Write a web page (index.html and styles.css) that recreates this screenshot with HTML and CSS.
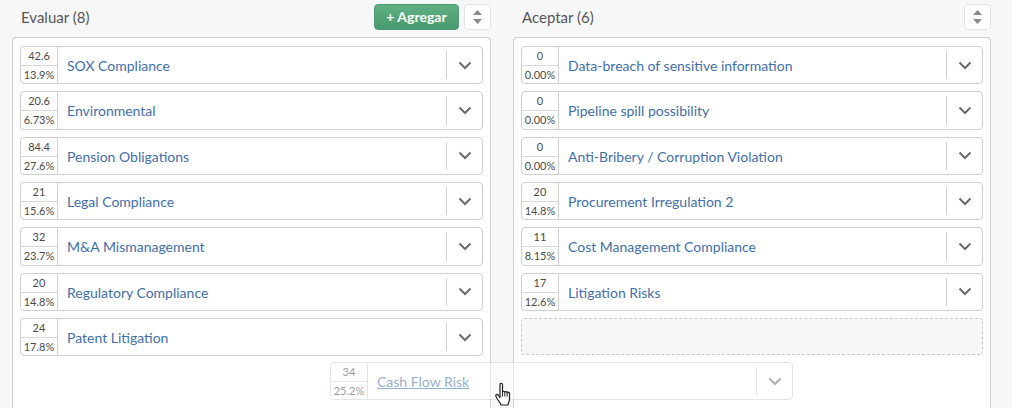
FILE: index.html
```html
<!DOCTYPE html>
<html lang="es">
<head>
<meta charset="utf-8">
<title>Evaluar / Aceptar</title>
<link rel="stylesheet" href="styles.css">
</head>
<body>
<div class="board">
  <section class="col">
    <header class="col-head">
      <h2 class="col-title">Evaluar (8)</h2>
      <button class="btn-add">+ Agregar</button>
      <button class="btn-sort"><svg width="11" height="16" viewBox="0 0 11 16"><path d="M5.5 1 10 6H1zM5.5 15 1 10h9z" fill="#8a8a8a"/><path d="M3.5 5 5.5 3 7.500 5M3.500 11l2 2 2-2" fill="none" stroke="#fff" stroke-width="0"/></svg></button>
    </header>
    <div class="panel">
      <article class="item"><div class="score"><span>42.6</span><span>13.9%</span></div><a class="name">SOX Compliance</a><div class="toggle"><svg class="chev" viewBox="0 0 14 9"><path d="M1.500 1.500 7 7l5.500-5.500" /></svg></div></article>
      <article class="item"><div class="score"><span>20.6</span><span>6.73%</span></div><a class="name">Environmental</a><div class="toggle"><svg class="chev" viewBox="0 0 14 9"><path d="M1.500 1.500 7 7l5.500-5.500" /></svg></div></article>
      <article class="item"><div class="score"><span>84.4</span><span>27.6%</span></div><a class="name">Pension Obligations</a><div class="toggle"><svg class="chev" viewBox="0 0 14 9"><path d="M1.500 1.500 7 7l5.500-5.500" /></svg></div></article>
      <article class="item"><div class="score"><span>21</span><span>15.6%</span></div><a class="name">Legal Compliance</a><div class="toggle"><svg class="chev" viewBox="0 0 14 9"><path d="M1.500 1.500 7 7l5.500-5.500" /></svg></div></article>
      <article class="item"><div class="score"><span>32</span><span>23.7%</span></div><a class="name">M&amp;A Mismanagement</a><div class="toggle"><svg class="chev" viewBox="0 0 14 9"><path d="M1.500 1.500 7 7l5.500-5.500" /></svg></div></article>
      <article class="item"><div class="score"><span>20</span><span>14.8%</span></div><a class="name">Regulatory Compliance</a><div class="toggle"><svg class="chev" viewBox="0 0 14 9"><path d="M1.500 1.500 7 7l5.500-5.500" /></svg></div></article>
      <article class="item"><div class="score"><span>24</span><span>17.8%</span></div><a class="name">Patent Litigation</a><div class="toggle"><svg class="chev" viewBox="0 0 14 9"><path d="M1.500 1.500 7 7l5.500-5.500" /></svg></div></article>
    </div>
  </section>
  <section class="col">
    <header class="col-head">
      <h2 class="col-title">Aceptar (6)</h2>
      <button class="btn-sort"><svg width="11" height="16" viewBox="0 0 11 16"><path d="M5.500 1 10 6H1zM5.500 15 1 10h9z" fill="#8a8a8a"/></svg></button>
    </header>
    <div class="panel">
      <article class="item"><div class="score"><span>0</span><span>0.00%</span></div><a class="name">Data-breach of sensitive information</a><div class="toggle"><svg class="chev" viewBox="0 0 14 9"><path d="M1.500 1.500 7 7l5.500-5.500" /></svg></div></article>
      <article class="item"><div class="score"><span>0</span><span>0.00%</span></div><a class="name">Pipeline spill possibility</a><div class="toggle"><svg class="chev" viewBox="0 0 14 9"><path d="M1.500 1.500 7 7l5.500-5.500" /></svg></div></article>
      <article class="item"><div class="score"><span>0</span><span>0.00%</span></div><a class="name">Anti-Bribery / Corruption Violation</a><div class="toggle"><svg class="chev" viewBox="0 0 14 9"><path d="M1.500 1.500 7 7l5.500-5.500" /></svg></div></article>
      <article class="item"><div class="score"><span>20</span><span>14.8%</span></div><a class="name">Procurement Irregulation 2</a><div class="toggle"><svg class="chev" viewBox="0 0 14 9"><path d="M1.500 1.500 7 7l5.500-5.500" /></svg></div></article>
      <article class="item"><div class="score"><span>11</span><span>8.15%</span></div><a class="name">Cost Management Compliance</a><div class="toggle"><svg class="chev" viewBox="0 0 14 9"><path d="M1.500 1.500 7 7l5.500-5.500" /></svg></div></article>
      <article class="item"><div class="score"><span>17</span><span>12.6%</span></div><a class="name">Litigation Risks</a><div class="toggle"><svg class="chev" viewBox="0 0 14 9"><path d="M1.500 1.500 7 7l5.500-5.500" /></svg></div></article>
      <div class="placeholder"></div>
    </div>
  </section>
</div>
<article class="item dragging"><div class="score"><span>34</span><span>25.2%</span></div><a class="name drag-link">Cash Flow Risk</a><div class="toggle"><svg class="chev" viewBox="0 0 14 9"><path d="M1.500 1.500 7 7l5.500-5.500" /></svg></div></article>
<svg class="cursor" width="18" height="25" viewBox="0 0 18 25"><path d="M5 2.500c0-1.700 2.500-1.700 2.500 0V10c0-1 2.300-1 2.300.3 0-1 2.300-1 2.300.4 0-.9 2.400-.7 2.400.8V17c0 2.500-1.200 3.500-1.500 6H6c-.5-2-2-3.500-3.300-5.500L1 14.500c-.9-1.700 1.200-2.900 2.300-1.300L5 15.500z" fill="#fff" stroke="#222" stroke-width="1.200" stroke-linejoin="round"/><path d="M7.500 10v4.500M9.800 10.500v4M12.100 10.800v3.700" stroke="#222" stroke-width="1" fill="none"/></svg>
</body>
</html>
```
FILE: styles.css
```css
* { box-sizing: border-box; }
html, body { height: 100%; }
body {
  margin: 0;
  height: 408px;
  overflow: hidden;
  background: #f7f7f7;
  font-family: Lato, "Open Sans", sans-serif;
  color: #4a4a4a;
  position: relative;
}
.board {
  display: grid;
  grid-template-columns: 479px 478px;
  gap: 22px;
  padding: 0 21px 0 12px;
  height: 100%;
}
.col { display: flex; flex-direction: column; min-height: 0; }
.col-head {
  height: 37px;
  flex: none;
  display: flex;
  align-items: flex-start;
  padding: 4px 0 0 9px;
  gap: 5px;
}
.col-title {
  margin: 0 auto 0 0;
  font-size: 15px;
  font-weight: 400;
  line-height: 26px;
  color: #555;
}
.btn-add {
  width: 85px;
  height: 26px;
  padding: 0;
  border: 1px solid #4f9a72;
  border-radius: 4px;
  background: linear-gradient(#5fb083, #479a6d);
  color: #fff;
  font: 700 14px/24px Lato, sans-serif;
}
.btn-sort {
  width: 27px;
  height: 26px;
  padding: 0;
  border: 1px solid #e4e4e4;
  border-radius: 4px;
  background: #fff;
  display: flex;
  align-items: center;
  justify-content: center;
}
.panel {
  flex: 1;
  background: #fff;
  border: 1px solid #d0d0d0;
  border-bottom: 0;
  border-radius: 4px 4px 0 0;
  padding: 8px 7px 0;
  display: flex;
  flex-direction: column;
  gap: 7px;
}
.item {
  height: 38.33px;
  flex: none;
  display: flex;
  align-items: stretch;
  background: #fff;
  border: 1px solid #cfcfcf;
  border-radius: 4px;
}
.score {
  width: 37px;
  flex: none;
  display: flex;
  flex-direction: column;
  border-right: 1px solid #cfcfcf;
  font-size: 11px;
  color: #4a4a4a;
  text-align: center;
}
.score span { flex: 1; line-height: 18px; }
.score span + span { border-top: 1px solid #d8d8d8; }
.name {
  flex: 1;
  padding-left: 9px;
  font-size: 14px;
  line-height: 37px;
  color: #3f6fa8;
}
.toggle {
  width: 36px;
  flex: none;
  margin: 4px 0;
  border-left: 1px solid #cfcfcf;
  display: flex;
  align-items: center;
  justify-content: center;
}
.chev { width: 14px; height: 9px; fill: none; stroke: #6b6b6b; stroke-width: 2; }
.placeholder {
  height: 37px;
  border: 1px dashed #c9c9c9;
  border-radius: 3px;
  background: #f7f7f7;
}
.dragging {
  position: absolute;
  left: 330px;
  top: 362px;
  width: 463px;
  opacity: 0.55;
}
.drag-link { text-decoration: underline; }
.cursor { position: absolute; left: 495px; top: 382px; }
```
